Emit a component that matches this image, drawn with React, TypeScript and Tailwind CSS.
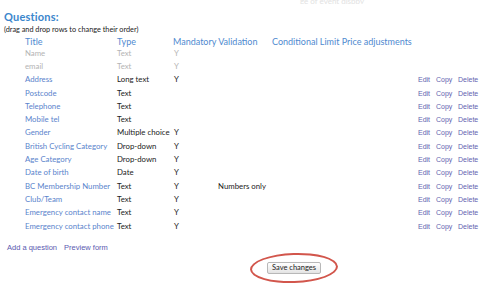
import React from 'react';

interface Question {
  title: string;
  type: string;
  mandatory: boolean;
  validation?: string;
  locked?: boolean;
}

const QUESTIONS: Question[] = [
  { title: 'Name', type: 'Text', mandatory: true, locked: true },
  { title: 'email', type: 'Text', mandatory: true, locked: true },
  { title: 'Address', type: 'Long text', mandatory: true },
  { title: 'Postcode', type: 'Text', mandatory: false },
  { title: 'Telephone', type: 'Text', mandatory: false },
  { title: 'Mobile tel', type: 'Text', mandatory: false },
  { title: 'Gender', type: 'Multiple choice', mandatory: true },
  { title: 'British Cycling Category', type: 'Drop-down', mandatory: true },
  { title: 'Age Category', type: 'Drop-down', mandatory: true },
  { title: 'Date of birth', type: 'Date', mandatory: true },
  { title: 'BC Membership Number', type: 'Text', mandatory: true, validation: 'Numbers only' },
  { title: 'Club/Team', type: 'Text', mandatory: true },
  { title: 'Emergency contact name', type: 'Text', mandatory: true },
  { title: 'Emergency contact phone', type: 'Text', mandatory: true },
];

// title | type | mandatory | validation | conditional | limit | price | actions
const cols = 'grid grid-cols-[92px_56px_43px_55px_71px_22px_54px_1fr]';

export default function App() {
  return (
    <div className="h-[287px] w-[500px] overflow-hidden bg-white font-['Lato','Liberation_Sans',sans-serif] text-[7.8px] text-[#222]">
      {/* cut-off line at the very top */}
      <div className="h-[4px] overflow-hidden whitespace-nowrap pl-[300px] text-[8px] leading-[2px] text-[#e2e2e2]">
        ge of event dispby
      </div>

      <div className="pl-[4px] pt-[4.5px]">
        <h2 className="text-[11px] font-bold leading-[15px] tracking-[0.2px] text-[#3b86cc]">Questions:</h2>
        <p className="whitespace-nowrap text-[7.3px] leading-[11px] text-[#222]">
          (drag and drop rows to change their order)
        </p>
      </div>

      <div className="pl-[25px]">
        {/* header */}
        <div className={`${cols} h-[12px] items-center whitespace-nowrap text-[9px] text-[#4f8ad0]`}>
          <span>Title</span>
          <span>Type</span>
          <span className="col-span-2">Mandatory Validation</span>
          <span className="col-span-3 pl-[1px]">Conditional Limit Price adjustments</span>
          <span />
        </div>

        {/* rows */}
        {QUESTIONS.map(q => (
          <div key={q.title} className={`${cols} h-[13.3px] items-center whitespace-nowrap leading-[13px]`}>
            <span className={q.locked ? 'text-[#b4b4b4]' : 'text-[#5a84cc]'}>{q.title}</span>
            <span className={q.locked ? 'text-[#b4b4b4]' : 'text-[#222]'}>{q.type}</span>
            <span className={q.locked ? 'pl-[1px] text-[#b4b4b4]' : 'pl-[1px] text-[#222]'}>
              {q.mandatory ? 'Y' : ''}
            </span>
            <span className="pl-[2px]">{q.validation ?? ''}</span>
            <span />
            <span />
            <span />
            {q.locked ? (
              <span />
            ) : (
              <span className="flex font-['Liberation_Sans',sans-serif] text-[7px] text-[#6464b0]">
                <span className="w-[18px]">Edit</span>
                <span className="w-[22px]">Copy</span>
                <span>Delete</span>
              </span>
            )}
          </div>
        ))}
      </div>

      <div className="mt-[9.5px] flex gap-[7px] pl-[7px] font-['Liberation_Sans',sans-serif] text-[7.5px] leading-[11px] text-[#5a5ab0]">
        <span>Add a question</span>
        <span>Preview form</span>
      </div>

      <div className="flex justify-center pl-[87px]">
        <div className="flex h-[30px] w-[88px] -rotate-2 items-center justify-center rounded-[50%] border-[2px] border-[#d2564c]">
          <button className="h-[12px] rotate-2 rounded-[2px] border border-[#b8b8b8] bg-gradient-to-b from-white to-[#e4e4e4] px-[4px] text-[7.5px] leading-[10px] text-[#222]">
            Save changes
          </button>
        </div>
      </div>
    </div>
  );
}
